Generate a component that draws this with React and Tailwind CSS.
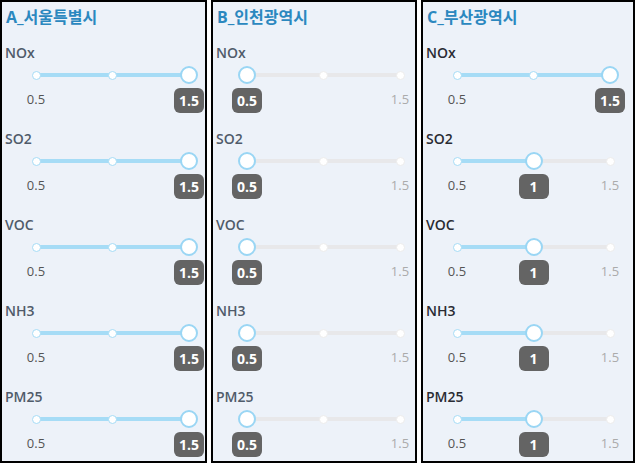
import React from 'react';

const ROWS = ['NOx', 'SO2', 'VOC', 'NH3', 'PM25'];
const MIN = 0.5;
const MAX = 1.5;

const PANELS = [
  { title: 'A_서울특별시', values: [1.5, 1.5, 1.5, 1.5, 1.5], dark: false, width: 'w-[207px]' },
  { title: 'B_인천광역시', values: [0.5, 0.5, 0.5, 0.5, 0.5], dark: false, width: 'w-[206px]' },
  { title: 'C_부산광역시', values: [1.5, 1, 1, 1, 1], dark: true, width: 'flex-1' },
];

const fmt = v => (Number.isInteger(v) ? String(v) : v.toFixed(1));

function Slider({ value }) {
  const pct = ((value - MIN) / (MAX - MIN)) * 100;
  return (
    <div className="ml-[34px] w-[153px]">
      {/* track with step marks */}
      <div className="relative flex h-[24px] items-center">
        <div className="h-[4px] w-full rounded-full bg-[#e8e8ea]">
          <div className="h-full rounded-full bg-[#a6dcf6]" style={{ width: `${pct}%` }} />
        </div>
        <div className="absolute inset-x-[-4.5px] flex items-center justify-between">
          {[0, 50, 100].map(m => (
            <span
              key={m}
              className={
                'h-[9px] w-[9px] rounded-full border-[1.5px] bg-white ' +
                (m <= pct ? 'border-[#a6dcf6]' : 'border-[#ececec]')
              }
            />
          ))}
        </div>
        <div
          className="absolute h-[18px] w-[18px] -translate-x-1/2 rounded-full border-2 border-[#9ad6f4] bg-white"
          style={{ left: `${pct}%` }}
        />
      </div>

      {/* min / max labels with value badge */}
      <div className="relative -mx-[12px] flex h-[26px] items-center justify-between text-[13px]">
        <span className={'w-[24px] text-center text-[#555] ' + (value === MIN ? 'invisible' : '')}>{fmt(MIN)}</span>
        <span className={'w-[24px] text-center text-[#ababab] ' + (value === MAX ? 'invisible' : '')}>{fmt(MAX)}</span>
        <span
          className="absolute top-[1px] flex h-[25px] min-w-[30px] -translate-x-1/2 items-center justify-center rounded-[6px] bg-[#646464] px-[5px] text-[14px] font-bold text-white"
          style={{ left: `calc(12px + ${pct} * (100% - 24px) / 100)` }}
        >
          {fmt(value)}
        </span>
      </div>
    </div>
  );
}

function Panel({ title, values, dark, width }) {
  return (
    <div className={`${width} flex h-[463px] flex-col overflow-hidden border-2 border-black bg-[#edf2f9]`}>
      <div className="mb-[11px] h-[30px] shrink-0 pl-[4px] text-[16px] font-bold leading-[30px] text-[#2b88bf]">
        {title}
      </div>
      {ROWS.map((r, i) => (
        <div key={r} className="h-[86px] shrink-0">
          <div
            className={
              'h-[20px] pl-[3px] text-[14px] font-semibold leading-[20px] ' +
              (dark ? 'text-[#2a2b33]' : 'text-[#505b6a]')
            }
          >
            {r}
          </div>
          <Slider value={values[i]} />
        </div>
      ))}
    </div>
  );
}

export default function App() {
  return (
    <div
      className="flex h-[463px] w-[635px] gap-[4px] bg-white"
      style={{ fontFamily: '"Open Sans", "Noto Sans CJK KR", sans-serif' }}
    >
      {PANELS.map(p => (
        <Panel key={p.title} {...p} />
      ))}
    </div>
  );
}
